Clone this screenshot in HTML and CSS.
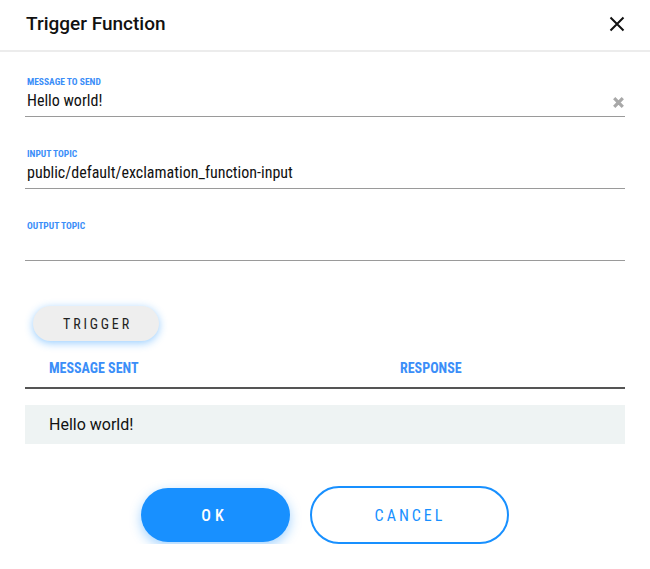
FILE: index.html
```html
<!DOCTYPE html>
<html>
<head>
<meta charset="utf-8">
<link rel="stylesheet" href="styles.css">
</head>
<body>
<div class="dialog">
  <div class="header">
    <div class="title">Trigger Function</div>
    <svg class="close" width="16" height="16" viewBox="0 0 16 16"><path d="M1.5 1.5 L14.5 14.5 M14.5 1.5 L1.5 14.5" stroke="#111" stroke-width="2" fill="none"/></svg>
  </div>
  <div class="body">
    <div class="field">
      <div class="label">MESSAGE TO SEND</div>
      <div class="input-row">
        <span class="value">Hello world!</span>
        <svg class="clear" width="13" height="13" viewBox="0 0 13 13"><path d="M2.2 2.2 L10.8 10.8 M10.8 2.2 L2.2 10.8" stroke="#a8a8a8" stroke-width="3.2" fill="none"/></svg>
      </div>
    </div>
    <div class="field">
      <div class="label">INPUT TOPIC</div>
      <div class="input-row"><span class="value">public/default/exclamation_function-input</span></div>
    </div>
    <div class="field">
      <div class="label">OUTPUT TOPIC</div>
      <div class="input-row"><span class="value"></span></div>
    </div>
    <button class="trigger">TRIGGER</button>
    <div class="table">
      <div class="thead">
        <div class="th">MESSAGE SENT</div>
        <div class="th">RESPONSE</div>
      </div>
      <div class="row">
        <div class="td">Hello world!</div>
        <div class="td"></div>
      </div>
    </div>
  </div>
  <div class="footer">
    <button class="btn ok">OK</button>
    <button class="btn cancel">CANCEL</button>
  </div>
</div>
</body>
</html>
```
FILE: styles.css
```css
* { box-sizing: border-box; }
html, body { margin: 0; padding: 0; background: #fff; }
body { font-family: Roboto, "Noto Sans", sans-serif; color: #111; width: 650px; }
.header {
  height: 52px;
  padding: 0 25px 0 26px;
  display: flex;
  align-items: center;
  justify-content: space-between;
  border-bottom: 2px solid #ececec;
}
.title { font-size: 19px; font-weight: 500; color: #111; line-height: 22px; margin-top: -2px; }
.close { margin-top: -2px; }
.body { padding: 24px 25px 0 25px; }
.field { height: 41px; border-bottom: 1px solid #9a9a9a; margin-bottom: 31px; }
.label {
  font-size: 9.5px; line-height: 12px; font-weight: 700; color: #3b8ef8;
  font-stretch: condensed; padding-left: 2px;
}
.input-row {
  margin-top: 3px; height: 20px; display: flex; align-items: center; justify-content: space-between;
  padding: 0 0 0 2px;
}
.value { font-size: 16px; line-height: 20px; font-stretch: condensed; color: #111; }
.clear { margin-top: 2px; }
.trigger {
  display: block;
  margin: 45px 0 0 8px;
  width: 126px; height: 35px;
  border: none; border-radius: 18px;
  background: #eeeeee;
  box-shadow: 0 2px 8px rgba(24,144,255,0.45);
  font-family: Roboto, sans-serif; font-stretch: condensed;
  font-size: 14px; letter-spacing: 2.8px; color: #222;
  padding: 0 0 0 3px;
}
.table { margin-top: 16px; }
.thead { display: grid; grid-template-columns: 351px 1fr; border-bottom: 2px solid #555; }
.th {
  padding: 3px 24px 11px 24px; font-size: 14px; line-height: 16px; font-weight: 700;
  color: #3b8ef8; font-stretch: condensed;
}
.row { display: grid; grid-template-columns: 351px 1fr; background: #eef3f3; margin-top: 16px; }
.td { padding: 10px 24px; font-size: 16px; line-height: 19px; color: #111; }
.footer { display: flex; justify-content: center; align-items: center; gap: 20px; margin-top: 42px; }
.btn {
  font-family: Roboto, sans-serif; font-stretch: condensed; font-size: 16px;
  border-radius: 29px; cursor: pointer;
}
.ok {
  width: 149px; height: 54px; border: none; background: #1890ff; color: #fff;
  font-weight: 500; letter-spacing: 4px; padding-left: 4px;
  box-shadow: 0 4px 12px rgba(24,144,255,0.4);
}
.cancel {
  width: 199px; height: 58px; border: 2px solid #1890ff; background: #fff; color: #1890ff;
  font-weight: 400; letter-spacing: 3px; padding-left: 7px;
}
```
